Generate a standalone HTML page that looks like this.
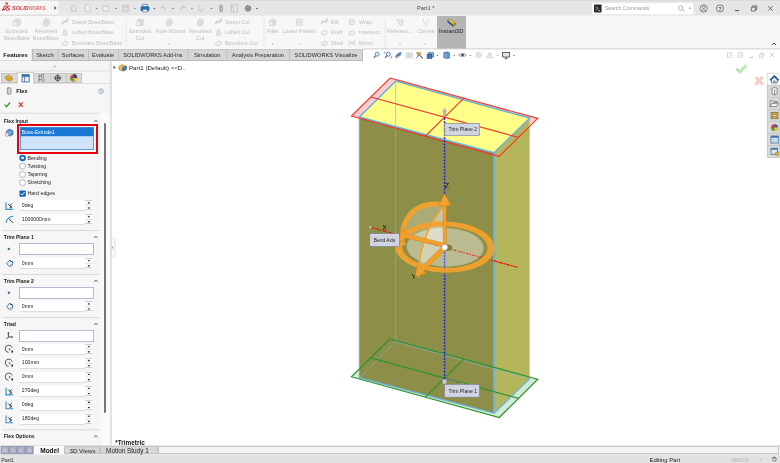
<!DOCTYPE html>
<html lang="en"><head><meta charset="utf-8"><title>SOLIDWORKS - Part1</title>
<style>
html,body{margin:0;padding:0;background:#fff;}
body{width:780px;height:463px;overflow:hidden;position:relative;font-family:"Liberation Sans", sans-serif;}
#app{position:absolute;left:0;top:0;width:780px;height:463px;overflow:hidden;background:#fff;filter:blur(0.4px);}
.b{position:absolute;box-sizing:border-box;}
.t{position:absolute;white-space:nowrap;}
svg{position:absolute;left:0;top:0;overflow:visible;}
</style></head><body><div id="app">
<svg width="780" height="463" viewBox="0 0 780 463"><rect x="0" y="0" width="780" height="16" fill="#e6e6e6"/></svg>
<svg width="780" height="463" viewBox="0 0 780 463"><rect x="0" y="0.9" width="58.6" height="13.8" fill="#f6f6f6"/></svg>
<svg width="780" height="463" viewBox="0 0 780 463"><rect x="0" y="0" width="780" height="0.9" fill="#dadada"/></svg>
<svg width="780" height="463" viewBox="0 0 780 463"><rect x="0" y="14.7" width="58.6" height="1.2" fill="#dedede"/></svg>
<svg width="780" height="463" viewBox="0 0 780 463"><rect x="58.6" y="15" width="721.4" height="1" fill="#ededed"/></svg>
<svg width="780" height="463" viewBox="0 0 780 463"><rect x="0" y="16" width="780" height="32.6" fill="#f7f7f7"/></svg>
<svg width="780" height="463" viewBox="0 0 780 463"><rect x="0" y="48.6" width="363" height="12" fill="#f7f7f7"/></svg>
<svg width="780" height="463" viewBox="0 0 780 463"><rect x="363" y="48.3" width="417" height="1.1" fill="#d2d2d2"/></svg>
<svg width="780" height="463" viewBox="0 0 780 463"><rect x="0" y="60.3" width="111.6" height="0.9" fill="#cfcfcf"/></svg>
<svg width="780" height="463" viewBox="0 0 780 463"><rect x="111.6" y="61.2" width="668.4" height="384.6" fill="#ffffff"/></svg>
<svg width="780" height="463" viewBox="0 0 780 463"><rect x="0" y="61.2" width="110" height="384.6" fill="#f6f6f6"/></svg>
<svg width="780" height="463" viewBox="0 0 780 463"><rect x="109.9" y="61.2" width="1.9" height="384.6" fill="#dcdcdc"/></svg>
<svg width="780" height="463" viewBox="0 0 780 463"><rect x="0" y="445.8" width="780" height="8.6" fill="#f0f0f0"/></svg>
<svg width="780" height="463" viewBox="0 0 780 463"><rect x="0" y="445.6" width="780" height="0.7" fill="#c2c2c2"/></svg>
<svg width="780" height="463" viewBox="0 0 780 463"><rect x="0" y="454.3" width="780" height="8.7" fill="#e2e2e2"/></svg>
<svg width="780" height="463" viewBox="0 0 780 463">
<g fill="none" stroke="#da333b" stroke-width="1.05" stroke-linecap="round" stroke-linejoin="round">
<path d="M5.4 3.2 Q6.8 2.2 7.6 3.2 Q7.8 4.2 6.6 4.8"/>
<path d="M2.4 10.2 L4.6 6 Q6.4 5.6 6.4 7.4 Q6 9.8 2.4 10.2 Z"/>
<path d="M9.8 6.2 Q7.6 5.6 7.4 7 Q7.4 7.9 8.6 8.2 Q9.8 8.7 9.2 9.7 Q8.2 10.6 6.4 10"/>
</g>
<text x="12.1" y="10.2" font-family="Liberation Sans, sans-serif" font-size="5.8" font-weight="bold" font-style="italic" fill="#da333b" textLength="16.6" lengthAdjust="spacingAndGlyphs">SOLID</text>
<text x="28.9" y="10.2" font-family="Liberation Sans, sans-serif" font-size="5.8" font-style="italic" fill="#da333b" textLength="16.4" lengthAdjust="spacingAndGlyphs">WORKS</text>
<path d="M54.2 5.9 L56.6 7.9 L54.2 9.9 Z" fill="#555"/>
<path d="M70.6 8.2 L73.8 5.2 L77 8.2 M71.6 7.8 V11.4 H76 V7.8" fill="none" stroke="#c2c2c2" stroke-width="0.9"/>
<path d="M85.4 4.8 H88.6 L90 6.2 V11.6 H85.4 Z" fill="#f2f2f2" stroke="#c2c2c2" stroke-width="0.8"/>
<path d="M95.60000000000001 8.0 L97.8 8.0 L96.7 9.299999999999999 Z" fill="#777"/>
<path d="M103 6 H105.4 L106 6.8 H108.6 V11 H103 Z" fill="#eee" stroke="#c2c2c2" stroke-width="0.8"/><path d="M106.6 4.6 q1.6 -0.6 2.2 1" fill="none" stroke="#c2c2c2" stroke-width="0.7"/>
<path d="M114.9 8.0 L117.1 8.0 L116 9.299999999999999 Z" fill="#777"/>
<path d="M122.6 5.2 H128.6 V11.6 H122.6 Z M124 5.2 V7.6 H127.4 V5.2 M124 11.6 V9.2 H127.4 V11.6" fill="#eee" stroke="#c2c2c2" stroke-width="0.8"/>
<path d="M133.9 8.0 L136.1 8.0 L135 9.299999999999999 Z" fill="#777"/>
<path d="M142.6 4.4 H147.4 V7 H142.6 Z" fill="#fff" stroke="#2c6aa6" stroke-width="0.7"/><path d="M141 6.8 H149 V10.6 H141 Z" fill="#2f73b5" stroke="#1d4f85" stroke-width="0.6"/><path d="M142.8 9.4 H147.2 V12 H142.8 Z" fill="#fff" stroke="#2c6aa6" stroke-width="0.6"/>
<path d="M153.3 8.0 L155.5 8.0 L154.4 9.299999999999999 Z" fill="#444"/>
<path d="M161.4 7.6 L163 5.4 M161.4 7.6 L163.8 8 M161.6 7.4 Q164.6 5.2 165.6 8 Q165.8 10 164 11" fill="none" stroke="#c2c2c2" stroke-width="0.8"/>
<path d="M171.9 8.0 L174.1 8.0 L173 9.299999999999999 Z" fill="#777"/>
<path d="M184.8 7.6 L183.2 5.4 M184.8 7.6 L182.4 8 M184.6 7.4 Q181.6 5.2 180.6 8 Q180.4 10 182.2 11" fill="none" stroke="#c2c2c2" stroke-width="0.8"/>
<path d="M190.9 8.0 L193.1 8.0 L192 9.299999999999999 Z" fill="#777"/>
<path d="M199 5 L203.4 8.6 L201.2 8.8 L202.2 11.2 L201.2 11.6 L200.2 9.2 L199 10.6 Z" fill="#f4f4f4" stroke="#c2c2c2" stroke-width="0.7"/>
<path d="M210.4 8.0 L212.6 8.0 L211.5 9.299999999999999 Z" fill="#777"/>
<rect x="219.4" y="4.6" width="3.4" height="7.6" rx="1.6" fill="#9a9a9a"/><circle cx="221.1" cy="6.6" r="0.8" fill="#ddd"/><circle cx="221.1" cy="8.6" r="0.8" fill="#ddd"/><circle cx="221.1" cy="10.5" r="0.8" fill="#ddd"/>
<rect x="231.2" y="5" width="6" height="7" fill="#ececec" stroke="#b4b4b4" stroke-width="0.7"/><path d="M233.4 5 V12 M231.2 7.4 H233.4" stroke="#b4b4b4" stroke-width="0.6"/>
<circle cx="248" cy="8.4" r="2.6" fill="none" stroke="#707070" stroke-width="1.5" stroke-dasharray="1.1 0.7"/><circle cx="248" cy="8.4" r="2.2" fill="#e6e6e6" stroke="#707070" stroke-width="0.9"/><rect x="246.6" y="7.4" width="2.8" height="2" fill="#707070"/>
<path d="M255.9 8.0 L258.1 8.0 L257 9.299999999999999 Z" fill="#444"/>
<rect x="592" y="3" width="101.4" height="11.2" fill="#fff"/>
<rect x="594" y="4.6" width="7.6" height="7.8" rx="0.6" fill="#2b2b2b"/><path d="M596 6.6 L597.8 8.4 L596 10.2 M598.2 10.6 H600" fill="none" stroke="#fff" stroke-width="0.7"/>
<circle cx="680.6" cy="8" r="2.2" fill="none" stroke="#9a9a9a" stroke-width="0.7"/><path d="M682.2 9.6 L684.4 11.8" stroke="#9a9a9a" stroke-width="0.8"/>
<path d="M688.9 7.800000000000001 L691.1 7.800000000000001 L690 9.1 Z" fill="#666"/>
<circle cx="703.6" cy="8.4" r="3.6" fill="none" stroke="#555" stroke-width="0.7"/><circle cx="703.6" cy="7.4" r="1.2" fill="none" stroke="#555" stroke-width="0.6"/><path d="M701.4 11 Q703.6 8 705.8 11" fill="none" stroke="#555" stroke-width="0.6"/>
<circle cx="720" cy="8.4" r="3.6" fill="none" stroke="#555" stroke-width="0.7"/>
<text x="720" y="10.5" text-anchor="middle" font-family="Liberation Sans, sans-serif" font-size="5.6" font-weight="bold" fill="#555">?</text>
<path d="M734.8 10.6 H739.2" stroke="#444" stroke-width="0.9"/>
<path d="M751.4 7.2 H755.4 V11 H751.4 Z M752.8 7.2 V5.8 H756.8 V9.6 H755.4" fill="none" stroke="#444" stroke-width="0.7"/>
<path d="M768.2 6.2 L772.6 10.6 M772.6 6.2 L768.2 10.6" stroke="#444" stroke-width="0.8"/>
</svg>
<span class="t" style="top:5.47px;font-size:5.7px;line-height:6.84px;color:#444;left:325.7px;width:200px;text-align:center;">Part1 *</span>
<span class="t" style="top:5.38px;font-size:5.2px;line-height:6.24px;color:#9a9a9a;left:604.9px;">Search Commands</span>
<svg width="780" height="463" viewBox="0 0 780 463">
<path d="M14.35 20.35 L17.075 18.75 L20.45 19.95 V24.85 L16.7 26.25 L14.35 25.05 Z" fill="#dedede" stroke="#d0d0d0" stroke-width="0.8" stroke-linejoin="round"/><path d="M12.95 21.35 H17.075 V25.65 H12.95 Z" fill="#f4f4f4" stroke="#d0d0d0" stroke-width="0.7"/>
<path d="M43.25 25.3 Q42.25 21.5 45.625 18.3 Q49.75 18.7 49.75 22.3 Q49.0 26.3 45.25 26.3 Z" fill="#e0e0e0" stroke="#d0d0d0" stroke-width="0.8"/><path d="M43.85 22.700000000000003 Q46.0 20.3 48.95 22.3" fill="none" stroke="#d0d0d0" stroke-width="0.7"/>
<path d="M62.2 23.6 Q62.800000000000004 20.8 65.2 21.599999999999998 Q67.2 22.0 67.8 19.2 " fill="none" stroke="#d0d0d0" stroke-width="1.7" stroke-linecap="round"/>
<path d="M63.2 35.3 V33.1 L64.0 29.7 H66.0 L66.8 33.1 V35.3 Z" fill="#e6e6e6" stroke="#d0d0d0" stroke-width="0.8"/>
<path d="M62.2 43.2 Q65.0 39.6 67.8 41.800000000000004 V44.400000000000006 Q65.0 46.6 62.2 45.2 Z" fill="#efefef" stroke="#d0d0d0" stroke-width="0.8"/>
<path d="M126.2 18 V47" stroke="#e2e2e2" stroke-width="0.8"/>
<path d="M137.6 20.35 L140.04999999999998 18.75 L143.2 19.95 V24.85 L139.7 26.25 L137.6 25.05 Z" fill="#dedede" stroke="#d0d0d0" stroke-width="0.8" stroke-linejoin="round"/><path d="M136.2 21.35 H140.04999999999998 V25.65 H136.2 Z" fill="#f4f4f4" stroke="#d0d0d0" stroke-width="0.7"/>
<path d="M166.5 25.05 Q165.5 21.55 168.65 18.55 Q172.5 18.95 172.5 22.3 Q171.8 26.05 168.3 26.05 Z" fill="#e0e0e0" stroke="#d0d0d0" stroke-width="0.8"/><path d="M167.1 22.675 Q169.0 20.425 171.7 22.3" fill="none" stroke="#d0d0d0" stroke-width="0.7"/>
<path d="M168.1 43.7 L169.9 43.7 L169 44.800000000000004 Z" fill="#8a8a8a"/>
<path d="M197.5 25.05 Q196.5 21.55 199.65 18.55 Q203.5 18.95 203.5 22.3 Q202.8 26.05 199.3 26.05 Z" fill="#e0e0e0" stroke="#d0d0d0" stroke-width="0.8"/><path d="M198.1 22.675 Q200.0 20.425 202.7 22.3" fill="none" stroke="#d0d0d0" stroke-width="0.7"/>
<path d="M215.7 23.6 Q216.29999999999998 20.8 218.7 21.599999999999998 Q220.7 22.0 221.29999999999998 19.2 " fill="none" stroke="#d0d0d0" stroke-width="1.7" stroke-linecap="round"/>
<path d="M216.7 35.3 V33.1 L217.5 29.7 H219.5 L220.29999999999998 33.1 V35.3 Z" fill="#e6e6e6" stroke="#d0d0d0" stroke-width="0.8"/>
<path d="M215.7 43.2 Q218.5 39.6 221.29999999999998 41.800000000000004 V44.400000000000006 Q218.5 46.6 215.7 45.2 Z" fill="#efefef" stroke="#d0d0d0" stroke-width="0.8"/>
<path d="M264 18 V47" stroke="#e2e2e2" stroke-width="0.8"/>
<path d="M270.75 20.6 L272.925 19.0 L275.85 20.2 V24.6 L272.6 26.0 L270.75 24.8 Z" fill="#dedede" stroke="#d0d0d0" stroke-width="0.8" stroke-linejoin="round"/><path d="M269.35 21.6 H272.925 V25.4 H269.35 Z" fill="#f4f4f4" stroke="#d0d0d0" stroke-width="0.7"/>
<path d="M271.70000000000005 43.7 L273.5 43.7 L272.6 44.800000000000004 Z" fill="#8a8a8a"/>
<rect x="296.6" y="19.2" width="2.4" height="2.4" fill="none" stroke="#d0d0d0" stroke-width="0.7"/>
<rect x="296.6" y="22.8" width="2.4" height="2.4" fill="none" stroke="#d0d0d0" stroke-width="0.7"/>
<rect x="300.20000000000005" y="19.2" width="2.4" height="2.4" fill="none" stroke="#d0d0d0" stroke-width="0.7"/>
<rect x="300.20000000000005" y="22.8" width="2.4" height="2.4" fill="none" stroke="#d0d0d0" stroke-width="0.7"/>
<path d="M298.6 43.7 L300.4 43.7 L299.5 44.800000000000004 Z" fill="#8a8a8a"/>
<path d="M321.59999999999997 23.6 Q322.2 20.8 324.59999999999997 21.599999999999998 Q326.59999999999997 22.0 327.2 19.2 " fill="none" stroke="#d0d0d0" stroke-width="1.7" stroke-linecap="round"/>
<path d="M321.59999999999997 32.7 Q324.4 29.099999999999998 327.2 31.3 V33.9 Q324.4 36.1 321.59999999999997 34.7 Z" fill="#efefef" stroke="#d0d0d0" stroke-width="0.8"/>
<path d="M321.59999999999997 43.2 Q324.4 39.6 327.2 41.800000000000004 V44.400000000000006 Q324.4 46.6 321.59999999999997 45.2 Z" fill="#efefef" stroke="#d0d0d0" stroke-width="0.8"/>
<rect x="349.4" y="19.599999999999998" width="4.8" height="4.8" fill="#efefef" stroke="#d0d0d0" stroke-width="0.8"/><path d="M349.4 21.4 H354.2" stroke="#d0d0d0" stroke-width="0.7"/>
<path d="M349.0 32.7 Q351.8 29.099999999999998 354.6 31.3 V33.9 Q351.8 36.1 349.0 34.7 Z" fill="#efefef" stroke="#d0d0d0" stroke-width="0.8"/>
<path d="M349.0 40.2 V45.800000000000004 M354.6 40.2 V45.800000000000004 M350.4 41.2 V44.800000000000004 L351.6 43.0 Z M353.2 41.2 V44.800000000000004 L352.0 43.0 Z" fill="#e4e4e4" stroke="#d0d0d0" stroke-width="0.6"/>
<path d="M385 18 V47" stroke="#e2e2e2" stroke-width="0.8"/>
<path d="M398 20 H402.6 V25 H399.4 Z" fill="#ececec" stroke="#d0d0d0" stroke-width="0.8"/><circle cx="397.2" cy="19.6" r="0.7" fill="#bbb"/>
<path d="M399.1 43.7 L400.9 43.7 L400 44.800000000000004 Z" fill="#8a8a8a"/>
<path d="M423.4 19 Q423 23.6 425.8 23.6 Q428.4 23.6 428 19 M424 26 Q425.8 23.4 427.6 26" fill="none" stroke="#d0d0d0" stroke-width="0.8"/>
<path d="M424.3 43.7 L426.09999999999997 43.7 L425.2 44.800000000000004 Z" fill="#8a8a8a"/>
<rect x="437" y="16" width="29" height="32.6" fill="#b5b5b5"/>
<path d="M447.6 20.6 L450.6 19.4 L455.8 23.2 L452.8 24.6 Z" fill="#f3c53c" stroke="#7a5c12" stroke-width="0.5"/><path d="M447.6 20.6 L452.8 24.6 V26.4 L447.6 22.2 Z" fill="#2f63b8" stroke="#1b3f7c" stroke-width="0.4"/><path d="M452.8 24.6 L455.8 23.2 V25 L452.8 26.4 Z" fill="#c8951c" stroke="#7a5c12" stroke-width="0.4"/>
<path d="M771.8 45.2 L774 43 L776.2 45.2" fill="none" stroke="#333" stroke-width="0.9"/>
</svg>
<span class="t" style="top:27.65px;font-size:5.4px;line-height:6.48px;color:#bebebe;left:-83.1px;width:200px;text-align:center;">Extruded</span>
<span class="t" style="top:35.15px;font-size:5.4px;line-height:6.48px;color:#bebebe;left:-83.1px;width:200px;text-align:center;">Boss/Base</span>
<span class="t" style="top:27.65px;font-size:5.4px;line-height:6.48px;color:#bebebe;left:-54px;width:200px;text-align:center;">Revolved</span>
<span class="t" style="top:35.15px;font-size:5.4px;line-height:6.48px;color:#bebebe;left:-54px;width:200px;text-align:center;">Boss/Base</span>
<span class="t" style="top:18.75px;font-size:5.4px;line-height:6.48px;color:#bebebe;left:71.8px;">Swept Boss/Base</span>
<span class="t" style="top:29.15px;font-size:5.4px;line-height:6.48px;color:#bebebe;left:71.8px;">Lofted Boss/Base</span>
<span class="t" style="top:39.65px;font-size:5.4px;line-height:6.48px;color:#bebebe;left:71.8px;">Boundary Boss/Base</span>
<span class="t" style="top:27.65px;font-size:5.4px;line-height:6.48px;color:#bebebe;left:40px;width:200px;text-align:center;">Extruded</span>
<span class="t" style="top:35.15px;font-size:5.4px;line-height:6.48px;color:#bebebe;left:40px;width:200px;text-align:center;">Cut</span>
<span class="t" style="top:27.65px;font-size:5.4px;line-height:6.48px;color:#bebebe;left:70.5px;width:200px;text-align:center;">Hole Wizard</span>
<span class="t" style="top:27.65px;font-size:5.4px;line-height:6.48px;color:#bebebe;left:100.19999999999999px;width:200px;text-align:center;">Revolved</span>
<span class="t" style="top:35.15px;font-size:5.4px;line-height:6.48px;color:#bebebe;left:100.19999999999999px;width:200px;text-align:center;">Cut</span>
<span class="t" style="top:18.75px;font-size:5.4px;line-height:6.48px;color:#bebebe;left:224.9px;">Swept Cut</span>
<span class="t" style="top:29.15px;font-size:5.4px;line-height:6.48px;color:#bebebe;left:224.9px;">Lofted Cut</span>
<span class="t" style="top:39.65px;font-size:5.4px;line-height:6.48px;color:#bebebe;left:224.9px;">Boundary Cut</span>
<span class="t" style="top:27.65px;font-size:5.4px;line-height:6.48px;color:#bebebe;left:172.60000000000002px;width:200px;text-align:center;">Fillet</span>
<span class="t" style="top:27.65px;font-size:5.4px;line-height:6.48px;color:#bebebe;left:199.60000000000002px;width:200px;text-align:center;">Linear Pattern</span>
<span class="t" style="top:18.75px;font-size:5.4px;line-height:6.48px;color:#bebebe;left:330.8px;">Rib</span>
<span class="t" style="top:29.15px;font-size:5.4px;line-height:6.48px;color:#bebebe;left:330.8px;">Draft</span>
<span class="t" style="top:39.65px;font-size:5.4px;line-height:6.48px;color:#bebebe;left:330.8px;">Shell</span>
<span class="t" style="top:18.75px;font-size:5.4px;line-height:6.48px;color:#bebebe;left:359px;">Wrap</span>
<span class="t" style="top:29.15px;font-size:5.4px;line-height:6.48px;color:#bebebe;left:359px;">Intersect</span>
<span class="t" style="top:39.65px;font-size:5.4px;line-height:6.48px;color:#bebebe;left:359px;">Mirror</span>
<span class="t" style="top:27.65px;font-size:5.4px;line-height:6.48px;color:#bebebe;left:300.1px;width:200px;text-align:center;">Referenc...</span>
<span class="t" style="top:27.65px;font-size:5.4px;line-height:6.48px;color:#bebebe;left:325.8px;width:200px;text-align:center;">Curves</span>
<span class="t" style="top:27.87px;font-size:5.7px;line-height:6.84px;color:#1c1c1c;left:351.2px;width:200px;text-align:center;">Instant3D</span>
<div class="b" style="left:31.8px;top:49px;width:330.8px;height:11.6px;background:#d6d6d6;border:0.7px solid #bababa;border-top-color:#c8c8c8;"></div>
<svg width="780" height="463" viewBox="0 0 780 463"><rect x="31.8" y="49" width="0.8" height="11.4" fill="#bababa"/></svg>
<span class="t" style="top:52.47px;font-size:5.7px;line-height:6.84px;color:#2a2a2a;left:-55.099999999999994px;width:200px;text-align:center;">Sketch</span>
<svg width="780" height="463" viewBox="0 0 780 463"><rect x="57.6" y="49" width="0.8" height="11.4" fill="#bababa"/></svg>
<span class="t" style="top:52.47px;font-size:5.7px;line-height:6.84px;color:#2a2a2a;left:-27.0px;width:200px;text-align:center;">Surfaces</span>
<svg width="780" height="463" viewBox="0 0 780 463"><rect x="88" y="49" width="0.8" height="11.4" fill="#bababa"/></svg>
<span class="t" style="top:52.47px;font-size:5.7px;line-height:6.84px;color:#2a2a2a;left:3.200000000000003px;width:200px;text-align:center;">Evaluate</span>
<svg width="780" height="463" viewBox="0 0 780 463"><rect x="118" y="49" width="0.8" height="11.4" fill="#bababa"/></svg>
<span class="t" style="top:52.47px;font-size:5.7px;line-height:6.84px;color:#2a2a2a;left:53.0px;width:200px;text-align:center;">SOLIDWORKS Add-Ins</span>
<svg width="780" height="463" viewBox="0 0 780 463"><rect x="187.6" y="49" width="0.8" height="11.4" fill="#bababa"/></svg>
<span class="t" style="top:52.47px;font-size:5.7px;line-height:6.84px;color:#2a2a2a;left:107.19999999999999px;width:200px;text-align:center;">Simulation</span>
<svg width="780" height="463" viewBox="0 0 780 463"><rect x="226.4" y="49" width="0.8" height="11.4" fill="#bababa"/></svg>
<span class="t" style="top:52.47px;font-size:5.7px;line-height:6.84px;color:#2a2a2a;left:157.89999999999998px;width:200px;text-align:center;">Analysis Preparation</span>
<svg width="780" height="463" viewBox="0 0 780 463"><rect x="289" y="49" width="0.8" height="11.4" fill="#bababa"/></svg>
<span class="t" style="top:52.47px;font-size:5.7px;line-height:6.84px;color:#2a2a2a;left:226.0px;width:200px;text-align:center;">SOLIDWORKS Visualize</span>
<span class="t" style="top:52.34px;font-size:5.9px;line-height:7.08px;color:#111;font-weight:bold;left:3.3px;">Features</span>
<svg width="780" height="463" viewBox="0 0 780 463">
<circle cx="377.2" cy="54.2" r="2" fill="#e8f0f8" stroke="#3d6d9e" stroke-width="0.8"/><path d="M375.79999999999995 55.6 L373.79999999999995 57.8" stroke="#3d6d9e" stroke-width="1.1"/>
<circle cx="388.40000000000003" cy="54.2" r="2" fill="#e8f0f8" stroke="#3d6d9e" stroke-width="0.8"/><path d="M387.0 55.6 L385.0 57.8" stroke="#3d6d9e" stroke-width="1.1"/>
<path d="M384.4 52.2 h1.6 M384.4 52.2 v1.6 M391.6 57.8 h-1.6 M391.6 57.8 v-1.6" stroke="#555" stroke-width="0.5" fill="none"/>
<path d="M395.4 57 Q397 52.6 401.4 52.6 L400 56 Q397.6 55.6 395.4 57 Z" fill="#5b8fc7" stroke="#34608f" stroke-width="0.5"/><path d="M396 58 l2.2 -1" stroke="#c33" stroke-width="0.7"/>
<path d="M406 52.8 H409 V58 H406 Z M409.6 52.8 H412.4 V58 H409.6 Z" fill="#e2e2e2" stroke="#c6c6c6" stroke-width="0.5"/>
<circle cx="419" cy="54" r="2" fill="#f4c04a" stroke="#b07a14" stroke-width="0.5"/><path d="M418.6 55.6 L416 58.4 M420 55.8 L422.6 58.6 M416.4 52.4 L423 58" stroke="#3d6d9e" stroke-width="0.8"/>
<path d="M427 54 H432 V58.6 H427 Z" fill="#3f78b8" stroke="#28507f" stroke-width="0.5"/><path d="M428.6 52.4 H433.6 V57 H432 V54 H428.6 Z" fill="#8db4dd" stroke="#28507f" stroke-width="0.5"/>
<path d="M436.4 54.9 L438.4 54.9 L437.4 56.0 Z" fill="#555"/>
<path d="M443.8 52.6 L447.4 51.8 L449.6 52.8 V58 L446 58.8 L443.8 57.8 Z" fill="#5b93cf" stroke="#2c5a8c" stroke-width="0.5"/><path d="M446 53.6 V58.8" stroke="#dfe9f4" stroke-width="0.5"/>
<path d="M453.2 54.9 L455.2 54.9 L454.2 56.0 Z" fill="#555"/>
<path d="M458.6 55 Q462.6 51.4 466.6 55 Q462.6 58.6 458.6 55 Z" fill="#d8d8d8" stroke="#777" stroke-width="0.5"/><circle cx="462.6" cy="55" r="1.3" fill="#444"/>
<path d="M469.4 54.9 L471.4 54.9 L470.4 56.0 Z" fill="#555"/>
<circle cx="478.6" cy="55" r="2.8" fill="#e9e9e9" stroke="#cfcfcf" stroke-width="0.6"/><path d="M476 55 H481.2 M478.6 52.4 V57.6" stroke="#d4d4d4" stroke-width="0.5"/>
<path d="M486.6 57.8 L489.6 52.2 L492.8 57.8 Z" fill="#e6e6e6" stroke="#cdcdcd" stroke-width="0.6"/><circle cx="489.7" cy="54" r="1.3" fill="#ddd"/>
<path d="M496.8 54.9 L498.8 54.9 L497.8 56.0 Z" fill="#888"/>
<rect x="502.6" y="52.4" width="7" height="4.6" fill="#dfe6ee" stroke="#444" stroke-width="0.8"/><path d="M504.6 58.6 H507.6 M506.1 57 V58.6" stroke="#444" stroke-width="0.8"/>
<path d="M513.2 54.9 L515.2 54.9 L514.2 56.0 Z" fill="#555"/>
<rect x="727.4" y="52.8" width="4.4" height="4.4" fill="none" stroke="#bdbdbd" stroke-width="0.6"/><path d="M729 55 h1.6" stroke="#bdbdbd" stroke-width="0.6"/>
<rect x="738.2" y="52.8" width="4.4" height="4.4" fill="none" stroke="#bdbdbd" stroke-width="0.6"/><path d="M740.4 55 h1.6" stroke="#999" stroke-width="0.6"/>
<path d="M749.4 57.4 H753" stroke="#bdbdbd" stroke-width="0.8"/>
<path d="M759.4 54.4 H762.8 V57.6 H759.4 Z M760.6 54.4 V53 H764 V56.2 H762.8" fill="none" stroke="#bdbdbd" stroke-width="0.6"/>
<path d="M770 53 L774 57 M774 53 L770 57" stroke="#bdbdbd" stroke-width="0.7"/>
</svg>
<svg width="780" height="463" viewBox="0 0 780 463"><rect x="0" y="61.2" width="110" height="9.6" fill="#f4f4f4"/></svg>
<svg width="780" height="463" viewBox="0 0 780 463"><circle cx="54.6" cy="66.5" r="1.1" fill="#b8b8b8"/></svg>
<svg width="780" height="463" viewBox="0 0 780 463"><rect x="0" y="70.6" width="110" height="0.7" fill="#d2d2d2"/></svg>
<div class="b" style="left:1.1px;top:72.6px;width:81px;height:10.6px;background:#dadada;border:0.6px solid #c6c6c6;"></div>
<div class="b" style="left:17px;top:72.3px;width:16.5px;height:11.6px;background:#fdfdfd;border:0.6px solid #cfcfcf;border-bottom:none;"></div>
<svg width="780" height="463" viewBox="0 0 780 463"><rect x="33.5" y="72.6" width="0.6" height="10.6" fill="#c2c2c2"/></svg>
<svg width="780" height="463" viewBox="0 0 780 463"><rect x="50" y="72.6" width="0.6" height="10.6" fill="#c2c2c2"/></svg>
<svg width="780" height="463" viewBox="0 0 780 463"><rect x="66" y="72.6" width="0.6" height="10.6" fill="#c2c2c2"/></svg>
<svg width="780" height="463" viewBox="0 0 780 463"><rect x="0" y="83.3" width="17" height="0.7" fill="#d6d6d6"/></svg>
<svg width="780" height="463" viewBox="0 0 780 463"><rect x="33.5" y="83.3" width="76.7" height="0.7" fill="#d6d6d6"/></svg>
<svg width="780" height="463" viewBox="0 0 780 463">
<path d="M5.6 77 L8.6 75 L12.2 77.4 L12.2 79.6 L9.2 81.4 L5.6 79 Z" fill="#e9b634" stroke="#9a6d10" stroke-width="0.6"/><path d="M5.6 77 L9.2 79.2 L12.2 77.4" fill="none" stroke="#9a6d10" stroke-width="0.5"/>
<rect x="22" y="74.6" width="7.2" height="7.4" fill="#e8f0f8" stroke="#2b5f94" stroke-width="0.8"/><path d="M22 76.6 H29.2 M24.6 76.6 V82" stroke="#2b5f94" stroke-width="0.7"/><rect x="22" y="74.6" width="7.2" height="2" fill="#3b77b5"/>
<path d="M39 74.6 V81.8 M39 76 H41.4 M39 79.6 H41.4" stroke="#444" stroke-width="0.6" fill="none"/><rect x="41.4" y="74.8" width="2.4" height="2.2" fill="#eee" stroke="#444" stroke-width="0.5"/><circle cx="43" cy="80" r="1.4" fill="#eee" stroke="#444" stroke-width="0.5"/>
<circle cx="57.7" cy="78" r="2.6" fill="none" stroke="#333" stroke-width="0.8"/><path d="M53.8 78 H61.6 M57.7 74.2 V81.8" stroke="#333" stroke-width="0.7"/><circle cx="57.7" cy="78" r="0.9" fill="#333"/>
<circle cx="73.7" cy="78" r="3.5" fill="#e53b2c"/><path d="M73.7 78 L73.7 74.5 A3.5 3.5 0 0 1 77.2 78 Z" fill="#2a4d9b"/><path d="M73.7 78 L70.2 78 A3.5 3.5 0 0 0 73.7 81.5 Z" fill="#3fae49"/><path d="M73.7 78 L73.7 81.5 A3.5 3.5 0 0 0 77.2 78 Z" fill="#f5c928"/><path d="M73.7 74.5 A3.5 3.5 0 0 1 76.6 76" stroke="#222" stroke-width="0.9" fill="none"/>
<path d="M7 88 Q9.4 87 11 88.4 V93.6 Q9 95 7 93.6 Q8 91 7 88 Z" fill="#eee" stroke="#555" stroke-width="0.6"/><path d="M8.6 88 Q9.6 91 8.6 94.2" fill="none" stroke="#777" stroke-width="0.5"/>
<circle cx="100.9" cy="91.2" r="2.5" fill="#f4f7fa" stroke="#6f8fb0" stroke-width="0.6"/>
<text x="100.9" y="92.6" text-anchor="middle" font-family="Liberation Sans, sans-serif" font-size="3.8" font-weight="bold" fill="#4f78a4">?</text>
<path d="M4.6 104.6 L6.6 106.7 L10 102.3" fill="none" stroke="#2d9a2d" stroke-width="1.3"/>
<path d="M18.8 102.4 L22.8 106.9 M22.8 102.4 L18.8 106.9" stroke="#e0301e" stroke-width="1.2"/>
</svg>
<span class="t" style="top:87.53px;font-size:5.6px;line-height:6.72px;color:#111;font-weight:bold;left:16.3px;">Flex</span>
<svg width="780" height="463" viewBox="0 0 780 463"><rect x="0" y="112.8" width="99.4" height="0.8" fill="#d4d4d4"/></svg>
<span class="t" style="top:117.94px;font-size:5.1px;line-height:6.12px;color:#222;font-weight:bold;left:3.8px;">Flex Input</span>
<svg width="780" height="463" viewBox="0 0 780 463"><path d="M94.2 121.89999999999999 L95.9 120.19999999999999 L97.6 121.89999999999999" fill="none" stroke="#444" stroke-width="0.9"/></svg>
<div class="b" style="left:17px;top:124.2px;width:81.3px;height:29.8px;border:2.1px solid #e8000f;"></div>
<div class="b" style="left:20.1px;top:127.1px;width:74px;height:23.2px;background:#cfe4f9;border:0.6px solid #5b9bd8;"></div>
<svg width="780" height="463" viewBox="0 0 780 463"><rect x="20.5" y="127.5" width="73.2" height="8.7" fill="#1b79d6"/></svg>
<span class="t" style="top:129.07px;font-size:5.05px;line-height:6.06px;color:#ffffff;left:21.8px;">Boss-Extrude1</span>
<svg width="780" height="463" viewBox="0 0 780 463"><path d="M6.4 131 L9.4 129.2 L13 130.8 V134.4 L10 136.2 L6.4 134.4 Z" fill="#4f8fd0" stroke="#1e4f86" stroke-width="0.6"/><path d="M6.4 131 L10 132.6 L13 130.8 M10 132.6 V136.2" fill="none" stroke="#dfeaf6" stroke-width="0.5"/><circle cx="7" cy="134.6" r="1.8" fill="#f0f0f0" stroke="#777" stroke-width="0.5"/></svg>
<svg width="780" height="463" viewBox="0 0 780 463"><circle cx="22.6" cy="157.9" r="2.3" fill="#fff" stroke="#1565c0" stroke-width="1.9"/></svg>
<span class="t" style="top:154.68px;font-size:5.2px;line-height:6.24px;color:#222;left:27.5px;">Bending</span>
<svg width="780" height="463" viewBox="0 0 780 463"><circle cx="22.6" cy="166.1" r="2.95" fill="#fff" stroke="#8c8c8c" stroke-width="0.6"/></svg>
<span class="t" style="top:162.88px;font-size:5.2px;line-height:6.24px;color:#222;left:27.5px;">Twisting</span>
<svg width="780" height="463" viewBox="0 0 780 463"><circle cx="22.6" cy="174.5" r="2.95" fill="#fff" stroke="#8c8c8c" stroke-width="0.6"/></svg>
<span class="t" style="top:171.28px;font-size:5.2px;line-height:6.24px;color:#222;left:27.5px;">Tapering</span>
<svg width="780" height="463" viewBox="0 0 780 463"><circle cx="22.6" cy="182.7" r="2.95" fill="#fff" stroke="#8c8c8c" stroke-width="0.6"/></svg>
<span class="t" style="top:179.48px;font-size:5.2px;line-height:6.24px;color:#222;left:27.5px;">Stretching</span>
<svg width="780" height="463" viewBox="0 0 780 463"><rect x="19.5" y="190.4" width="6.3" height="6.3" rx="0.9" fill="#1565c0"/></svg>
<svg width="780" height="463" viewBox="0 0 780 463"><path d="M20.8 193.6 L22.2 195 L24.6 192" fill="none" stroke="#fff" stroke-width="0.9"/></svg>
<span class="t" style="top:190.31px;font-size:5.3px;line-height:6.36px;color:#222;left:27.5px;">Hard edges</span>
<div class="b" style="left:19.8px;top:200.25px;width:65px;height:10.2px;background:#ffffff;box-shadow:0 0.5px 0.6px #dcdcdc;"></div>
<span class="t" style="top:201.73px;font-size:5.2px;line-height:6.24px;color:#222;left:21.8px;">0deg</span>
<div class="b" style="left:85.4px;top:200.25px;width:7px;height:10.2px;background:#fbfbfb;border:0.5px solid #cfcfcf;border-left:none;border-right:none;"></div>
<svg width="780" height="463" viewBox="0 0 780 463"><rect x="85.4" y="205.1" width="7" height="0.5" fill="#cfcfcf"/></svg>
<svg width="780" height="463" viewBox="0 0 780 463"><path d="M87.6 203.45 L88.9 201.85 L90.2 203.45 Z M87.6 207.45 L88.9 209.04999999999998 L90.2 207.45 Z" fill="#1c1c1c"/><path d="M6 202.15 V209.35 H13" fill="none" stroke="#3a8dc0" stroke-width="1.1"/><path d="M8 203.95 L11.6 207.54999999999998 M11.8 203.54999999999998 L9.6 205.95 M11.2 205.75 V207.75 H9.4" fill="none" stroke="#222" stroke-width="0.8"/></svg>
<div class="b" style="left:19.8px;top:214.15px;width:65px;height:10.2px;background:#ffffff;box-shadow:0 0.5px 0.6px #dcdcdc;"></div>
<span class="t" style="top:215.63px;font-size:5.2px;line-height:6.24px;color:#222;left:21.8px;">1000000mm</span>
<div class="b" style="left:85.4px;top:214.15px;width:7px;height:10.2px;background:#fbfbfb;border:0.5px solid #cfcfcf;border-left:none;border-right:none;"></div>
<svg width="780" height="463" viewBox="0 0 780 463"><rect x="85.4" y="219.0" width="7" height="0.5" fill="#cfcfcf"/></svg>
<svg width="780" height="463" viewBox="0 0 780 463"><path d="M87.6 217.35 L88.9 215.75 L90.2 217.35 Z M87.6 221.35 L88.9 222.95 L90.2 221.35 Z" fill="#1c1c1c"/><path d="M6 222.85 Q7.4 216.65 13.2 216.25" fill="none" stroke="#3a8dc0" stroke-width="1.1"/><path d="M9 218.85 L13.2 222.85" stroke="#222" stroke-width="0.9"/></svg>
<svg width="780" height="463" viewBox="0 0 780 463"><rect x="2" y="230.2" width="97.2" height="0.8" fill="#d4d4d4"/></svg>
<span class="t" style="top:234.04px;font-size:5.1px;line-height:6.12px;color:#222;font-weight:bold;left:3.8px;">Trim Plane 1</span>
<svg width="780" height="463" viewBox="0 0 780 463"><path d="M94.2 238.0 L95.9 236.29999999999998 L97.6 238.0" fill="none" stroke="#444" stroke-width="0.9"/></svg>
<div class="b" style="left:19.4px;top:242.85px;width:74.7px;height:12px;background:#ffffff;border:0.7px solid #b4b9cf;"></div>
<svg width="780" height="463" viewBox="0 0 780 463"><circle cx="8.9" cy="249.04999999999998" r="1.25" fill="#2f7fae"/></svg>
<div class="b" style="left:19.8px;top:258.09999999999997px;width:65px;height:10.2px;background:#ffffff;box-shadow:0 0.5px 0.6px #dcdcdc;"></div>
<span class="t" style="top:259.58px;font-size:5.2px;line-height:6.24px;color:#222;left:21.8px;">0mm</span>
<div class="b" style="left:85.4px;top:258.09999999999997px;width:7px;height:10.2px;background:#fbfbfb;border:0.5px solid #cfcfcf;border-left:none;border-right:none;"></div>
<svg width="780" height="463" viewBox="0 0 780 463"><rect x="85.4" y="262.95" width="7" height="0.5" fill="#cfcfcf"/></svg>
<svg width="780" height="463" viewBox="0 0 780 463"><path d="M87.6 261.3 L88.9 259.7 L90.2 261.3 Z M87.6 265.3 L88.9 266.9 L90.2 265.3 Z" fill="#1c1c1c"/><path d="M6.6 263.8 L9.4 260.4 L12.6 262.0 V264.59999999999997 L9.6 266.4 Z" fill="#f4f4f4" stroke="#1d5f96" stroke-width="0.8"/><path d="M9.6 260.4 L12.8 262.2" stroke="#222" stroke-width="0.8"/><circle cx="11.4" cy="265.4" r="1" fill="#eee" stroke="#444" stroke-width="0.4"/></svg>
<svg width="780" height="463" viewBox="0 0 780 463"><rect x="2" y="274.1" width="97.2" height="0.8" fill="#d4d4d4"/></svg>
<span class="t" style="top:277.84px;font-size:5.1px;line-height:6.12px;color:#222;font-weight:bold;left:3.8px;">Trim Plane 2</span>
<svg width="780" height="463" viewBox="0 0 780 463"><path d="M94.2 281.8 L95.9 280.1 L97.6 281.8" fill="none" stroke="#444" stroke-width="0.9"/></svg>
<div class="b" style="left:19.4px;top:286.6px;width:74.7px;height:12px;background:#ffffff;border:0.7px solid #b4b9cf;"></div>
<svg width="780" height="463" viewBox="0 0 780 463"><circle cx="8.9" cy="292.8" r="1.25" fill="#2f7fae"/></svg>
<div class="b" style="left:19.8px;top:301.2px;width:65px;height:10.2px;background:#ffffff;box-shadow:0 0.5px 0.6px #dcdcdc;"></div>
<span class="t" style="top:302.68px;font-size:5.2px;line-height:6.24px;color:#222;left:21.8px;">0mm</span>
<div class="b" style="left:85.4px;top:301.2px;width:7px;height:10.2px;background:#fbfbfb;border:0.5px solid #cfcfcf;border-left:none;border-right:none;"></div>
<svg width="780" height="463" viewBox="0 0 780 463"><rect x="85.4" y="306.05" width="7" height="0.5" fill="#cfcfcf"/></svg>
<svg width="780" height="463" viewBox="0 0 780 463"><path d="M87.6 304.40000000000003 L88.9 302.8 L90.2 304.40000000000003 Z M87.6 308.40000000000003 L88.9 310.0 L90.2 308.40000000000003 Z" fill="#1c1c1c"/><path d="M6.6 306.90000000000003 L9.4 303.5 L12.6 305.1 V307.7 L9.6 309.5 Z" fill="#f4f4f4" stroke="#1d5f96" stroke-width="0.8"/><path d="M9.6 303.5 L12.8 305.3" stroke="#222" stroke-width="0.8"/><circle cx="11.4" cy="308.5" r="1" fill="#eee" stroke="#444" stroke-width="0.4"/></svg>
<svg width="780" height="463" viewBox="0 0 780 463"><rect x="2" y="317.2" width="97.2" height="0.8" fill="#d4d4d4"/></svg>
<span class="t" style="top:320.84px;font-size:5.1px;line-height:6.12px;color:#222;font-weight:bold;left:3.8px;">Triad</span>
<svg width="780" height="463" viewBox="0 0 780 463"><path d="M94.2 324.8 L95.9 323.1 L97.6 324.8" fill="none" stroke="#444" stroke-width="0.9"/></svg>
<div class="b" style="left:19.4px;top:330px;width:74.7px;height:12px;background:#ffffff;border:0.7px solid #b4b9cf;"></div>
<svg width="780" height="463" viewBox="0 0 780 463"><path d="M8.4 332.8 V337 L6.4 339 M8.4 337 H12.4" fill="none" stroke="#222" stroke-width="0.8"/><path d="M7.6 333.6 L8.4 332.4 L9.2 333.6 M11.6 336.2 L12.8 337 L11.6 337.8" fill="none" stroke="#222" stroke-width="0.6"/></svg>
<div class="b" style="left:19.8px;top:344.09999999999997px;width:65px;height:10.2px;background:#ffffff;box-shadow:0 0.5px 0.6px #dcdcdc;"></div>
<span class="t" style="top:345.58px;font-size:5.2px;line-height:6.24px;color:#222;left:21.8px;">0mm</span>
<div class="b" style="left:85.4px;top:344.09999999999997px;width:7px;height:10.2px;background:#fbfbfb;border:0.5px solid #cfcfcf;border-left:none;border-right:none;"></div>
<svg width="780" height="463" viewBox="0 0 780 463"><rect x="85.4" y="348.95" width="7" height="0.5" fill="#cfcfcf"/></svg>
<svg width="780" height="463" viewBox="0 0 780 463"><path d="M87.6 347.3 L88.9 345.7 L90.2 347.3 Z M87.6 351.3 L88.9 352.9 L90.2 351.3 Z" fill="#1c1c1c"/><path d="M12.2 347.59999999999997 A3.6 3.6 0 1 0 8.6 352.4" fill="none" stroke="#333" stroke-width="0.8"/><path d="M8.4 349.2 H10.8 M9.6 348.0 V350.4" stroke="#2f7fc0" stroke-width="0.7"/><rect x="11.4" y="350.59999999999997" width="1.6" height="2" fill="#222"/></svg>
<div class="b" style="left:19.8px;top:358.0px;width:65px;height:10.2px;background:#ffffff;box-shadow:0 0.5px 0.6px #dcdcdc;"></div>
<span class="t" style="top:359.48px;font-size:5.2px;line-height:6.24px;color:#222;left:21.8px;">100mm</span>
<div class="b" style="left:85.4px;top:358.0px;width:7px;height:10.2px;background:#fbfbfb;border:0.5px solid #cfcfcf;border-left:none;border-right:none;"></div>
<svg width="780" height="463" viewBox="0 0 780 463"><rect x="85.4" y="362.85" width="7" height="0.5" fill="#cfcfcf"/></svg>
<svg width="780" height="463" viewBox="0 0 780 463"><path d="M87.6 361.20000000000005 L88.9 359.6 L90.2 361.20000000000005 Z M87.6 365.20000000000005 L88.9 366.8 L90.2 365.20000000000005 Z" fill="#1c1c1c"/><path d="M12.2 361.5 A3.6 3.6 0 1 0 8.6 366.3" fill="none" stroke="#333" stroke-width="0.8"/><path d="M8.4 363.1 H10.8 M9.6 361.90000000000003 V364.3" stroke="#2f7fc0" stroke-width="0.7"/><rect x="11.4" y="364.5" width="1.6" height="2" fill="#222"/></svg>
<div class="b" style="left:19.8px;top:371.9px;width:65px;height:10.2px;background:#ffffff;box-shadow:0 0.5px 0.6px #dcdcdc;"></div>
<span class="t" style="top:373.38px;font-size:5.2px;line-height:6.24px;color:#222;left:21.8px;">0mm</span>
<div class="b" style="left:85.4px;top:371.9px;width:7px;height:10.2px;background:#fbfbfb;border:0.5px solid #cfcfcf;border-left:none;border-right:none;"></div>
<svg width="780" height="463" viewBox="0 0 780 463"><rect x="85.4" y="376.75" width="7" height="0.5" fill="#cfcfcf"/></svg>
<svg width="780" height="463" viewBox="0 0 780 463"><path d="M87.6 375.1 L88.9 373.5 L90.2 375.1 Z M87.6 379.1 L88.9 380.7 L90.2 379.1 Z" fill="#1c1c1c"/><path d="M12.2 375.4 A3.6 3.6 0 1 0 8.6 380.2" fill="none" stroke="#333" stroke-width="0.8"/><path d="M8.4 377 H10.8 M9.6 375.8 V378.2" stroke="#2f7fc0" stroke-width="0.7"/><rect x="11.4" y="378.4" width="1.6" height="2" fill="#222"/></svg>
<div class="b" style="left:19.8px;top:385.79999999999995px;width:65px;height:10.2px;background:#ffffff;box-shadow:0 0.5px 0.6px #dcdcdc;"></div>
<span class="t" style="top:387.28px;font-size:5.2px;line-height:6.24px;color:#222;left:21.8px;">270deg</span>
<div class="b" style="left:85.4px;top:385.79999999999995px;width:7px;height:10.2px;background:#fbfbfb;border:0.5px solid #cfcfcf;border-left:none;border-right:none;"></div>
<svg width="780" height="463" viewBox="0 0 780 463"><rect x="85.4" y="390.65" width="7" height="0.5" fill="#cfcfcf"/></svg>
<svg width="780" height="463" viewBox="0 0 780 463"><path d="M87.6 389.0 L88.9 387.4 L90.2 389.0 Z M87.6 393.0 L88.9 394.59999999999997 L90.2 393.0 Z" fill="#1c1c1c"/><path d="M6 387.7 V394.9 H13" fill="none" stroke="#3a8dc0" stroke-width="1.1"/><path d="M8 389.5 L11.6 393.09999999999997 M11.8 389.09999999999997 L9.6 391.5 M11.2 391.29999999999995 V393.29999999999995 H9.4" fill="none" stroke="#222" stroke-width="0.8"/></svg>
<div class="b" style="left:19.8px;top:399.7px;width:65px;height:10.2px;background:#ffffff;box-shadow:0 0.5px 0.6px #dcdcdc;"></div>
<span class="t" style="top:401.18px;font-size:5.2px;line-height:6.24px;color:#222;left:21.8px;">0deg</span>
<div class="b" style="left:85.4px;top:399.7px;width:7px;height:10.2px;background:#fbfbfb;border:0.5px solid #cfcfcf;border-left:none;border-right:none;"></div>
<svg width="780" height="463" viewBox="0 0 780 463"><rect x="85.4" y="404.55" width="7" height="0.5" fill="#cfcfcf"/></svg>
<svg width="780" height="463" viewBox="0 0 780 463"><path d="M87.6 402.90000000000003 L88.9 401.3 L90.2 402.90000000000003 Z M87.6 406.90000000000003 L88.9 408.5 L90.2 406.90000000000003 Z" fill="#1c1c1c"/><path d="M6 401.6 V408.8 H13" fill="none" stroke="#3a8dc0" stroke-width="1.1"/><path d="M8 403.40000000000003 L11.6 407.0 M11.8 403.0 L9.6 405.40000000000003 M11.2 405.2 V407.2 H9.4" fill="none" stroke="#222" stroke-width="0.8"/></svg>
<div class="b" style="left:19.8px;top:413.59999999999997px;width:65px;height:10.2px;background:#ffffff;box-shadow:0 0.5px 0.6px #dcdcdc;"></div>
<span class="t" style="top:415.08px;font-size:5.2px;line-height:6.24px;color:#222;left:21.8px;">180deg</span>
<div class="b" style="left:85.4px;top:413.59999999999997px;width:7px;height:10.2px;background:#fbfbfb;border:0.5px solid #cfcfcf;border-left:none;border-right:none;"></div>
<svg width="780" height="463" viewBox="0 0 780 463"><rect x="85.4" y="418.45" width="7" height="0.5" fill="#cfcfcf"/></svg>
<svg width="780" height="463" viewBox="0 0 780 463"><path d="M87.6 416.8 L88.9 415.2 L90.2 416.8 Z M87.6 420.8 L88.9 422.4 L90.2 420.8 Z" fill="#1c1c1c"/><path d="M6 415.5 V422.7 H13" fill="none" stroke="#3a8dc0" stroke-width="1.1"/><path d="M8 417.3 L11.6 420.9 M11.8 416.9 L9.6 419.3 M11.2 419.09999999999997 V421.09999999999997 H9.4" fill="none" stroke="#222" stroke-width="0.8"/></svg>
<svg width="780" height="463" viewBox="0 0 780 463"><rect x="2" y="429.4" width="97.2" height="0.8" fill="#d4d4d4"/></svg>
<span class="t" style="top:433.24px;font-size:5.1px;line-height:6.12px;color:#222;font-weight:bold;left:3.8px;">Flex Options</span>
<svg width="780" height="463" viewBox="0 0 780 463"><path d="M94.2 437.2 L95.9 435.5 L97.6 437.2" fill="none" stroke="#444" stroke-width="0.9"/></svg>
<svg width="780" height="463" viewBox="0 0 780 463"><rect x="100.8" y="113.6" width="9.4" height="331.6" fill="#fafafa"/></svg>
<div class="b" style="left:103.5px;top:122.6px;width:2.8px;height:290.2px;background:#747474;border-radius:1px;"></div>
<svg width="780" height="463" viewBox="0 0 780 463"><path d="M111.4 237.6 L114.9 238.6 V256.8 L111.4 257.8 Z" fill="#fbfbfb" stroke="#d4d4d4" stroke-width="0.7"/><path d="M112.8 246.3 L111.5 247.6 L112.8 248.9 Z" fill="#8a8a8a"/></svg>
<svg width="780" height="463" viewBox="0 0 780 463">
<polygon points="390.0,339.0 537.8,379.2 499.3,417.5 351.4,376.8" fill="#d3ead3"/>
<polygon points="390.0,78.0 537.8,118.4 499.2,156.4 351.4,116.0" fill="#ffcdd0"/>
<polygon points="359.4,117.0 494.0,152.6 494.0,413.2 359.4,377.6" fill="#8d8e48"/>
<polygon points="494.0,152.6 529.6,118.2 529.6,378.8 494.0,413.2" fill="#b5b55c"/>
<polygon points="395.7,81.2 529.6,118.2 494.0,152.6 359.4,117.0" fill="#ffff8a"/>
<path d="M395.7 81.2 V341.8 L359.4 377.6 M395.7 341.8 L529.6 378.8" fill="none" stroke="#7fb4cf" stroke-width="0.7" opacity="0.9"/>
<path d="M529.6 118.2 V378.8" stroke="#a9cfe0" stroke-width="1" fill="none"/>
<polygon points="395.7,81.2 529.6,118.2 494.0,152.6 359.4,117.0" fill="none" stroke="#6cb2d6" stroke-width="1.4" stroke-linejoin="round"/>
<path d="M359.4 117 V377.6 L494 413.20000000000005 L529.6 378.8" fill="none" stroke="#6cb2d6" stroke-width="1.2" stroke-linejoin="round"/>
<path d="M494 152.6 V413.20000000000005" stroke="#6cb2d6" stroke-width="2" fill="none"/>
<polygon points="390.0,339.0 537.8,379.2 499.3,417.5 351.4,376.8" fill="none" stroke="#2c9330" stroke-width="1.15"/>
<path d="M370.7 357.9 L518.5 398.4 M463.9 359.1 L425.4 397.1" stroke="#2c9330" stroke-width="1.15" fill="none"/>
<polygon points="395.7,81.2 529.6,118.2 494.0,152.6 359.4,117.0" fill="#ffff8a"/>
<polygon points="395.7,81.2 529.6,118.2 494.0,152.6 359.4,117.0" fill="none" stroke="#6cb2d6" stroke-width="1.3" stroke-linejoin="round"/>
<path d="M395.7 81.2 V127.2" stroke="#8cc0dc" stroke-width="0.8" fill="none"/>
<polygon points="390.0,78.0 537.8,118.4 499.2,156.4 351.4,116.0" fill="none" stroke="#f4342c" stroke-width="1.1"/>
<path d="M370.7 97.0 L518.5 137.4 M463.9 98.2 L425.3 136.2" stroke="#f4342c" stroke-width="1.1" fill="none"/>
<path d="M444.6 118 V379" stroke="#1414f0" stroke-width="1.5" stroke-dasharray="1.7 1.5" fill="none"/>
<ellipse cx="445.2" cy="247.3" rx="38.6" ry="19.4" transform="rotate(1.5 445.2 247.3)" fill="#ffffff" fill-opacity="0.40"/>
<polygon points="444.7,247.3 402.4,236.7 402.4,235.1 402.5,233.4 402.7,231.8 402.9,230.3 403.2,228.7 403.6,227.2 404.0,225.7 404.5,224.2 405.0,222.8 405.6,221.4 406.3,220.1 407.0,218.8 407.8,217.5 408.6,216.3 409.5,215.2 410.5,214.0 411.5,213.0 412.5,212.0 413.6,211.0 414.8,210.1 416.0,209.3 417.2,208.5 418.5,207.8 419.8,207.1 421.2,206.5 422.6,206.0 424.0,205.5 425.5,205.1 427.0,204.7 428.5,204.4 430.1,204.2 431.6,204.1 433.2,204.0 434.8,204.0 436.4,204.0 438.1,204.2 439.7,204.3 441.4,204.6 443.0,204.9 444.7,205.3" fill="#ffffff" fill-opacity="0.26"/>
<polygon points="444.7,247.3 418.7,272.3 418.7,270.6 418.8,268.9 418.9,267.2 419.0,265.4 419.2,263.6 419.4,261.8 419.7,260.0 420.0,258.1 420.3,256.2 420.7,254.3 421.1,252.4 421.5,250.5 422.0,248.6 422.5,246.7 423.1,244.8 423.7,242.8 424.3,240.9 424.9,239.0 425.6,237.1 426.3,235.3 427.1,233.4 427.8,231.6 428.6,229.8 429.4,228.0 430.3,226.3 431.1,224.6 432.0,222.9 432.9,221.2 433.8,219.6 434.8,218.1 435.7,216.5 436.7,215.1 437.6,213.7 438.6,212.3 439.6,211.0 440.6,209.7 441.6,208.5 442.7,207.4 443.7,206.3 444.7,205.3" fill="#ffffff" fill-opacity="0.34"/>
<path d="M370.2 227.3 L518 267.4" stroke="#f01010" stroke-width="1.1" stroke-dasharray="3.2 1.2 1 1.2" fill="none" opacity="0.75"/>
<path d="M444.6 226 V268" stroke="#1414f0" stroke-width="1.5" stroke-dasharray="1.7 1.5" fill="none" opacity="0.45"/>
<path d="M395 247.1 A49.8 25.7 0 1 0 494.6 247.1 A49.8 25.7 0 1 0 395 247.1 Z M402 247.1 A42.8 20.7 0 1 1 487.6 247.1 A42.8 20.7 0 1 1 402 247.1 Z" transform="rotate(1.5 444.8 247.1)" fill="#f3a12c" fill-opacity="0.93" fill-rule="evenodd"/>
<polyline points="403.3,245.7 403.0,243.8 402.7,241.9 402.5,240.0 402.4,238.2 402.4,236.3 402.5,234.5 402.6,232.7 402.8,231.0 403.1,229.2 403.5,227.5 403.9,225.9 404.5,224.2 405.1,222.7 405.8,221.1 406.5,219.7 407.4,218.2 408.3,216.9 409.2,215.5 410.3,214.3 411.4,213.1 412.5,212.0 413.8,210.9 415.1,209.9 416.4,209.0 417.8,208.1 419.2,207.4 420.7,206.7 422.3,206.1 423.9,205.5 425.5,205.1 427.2,204.7 428.9,204.4 430.6,204.2 432.3,204.0 434.1,204.0 435.9,204.0 437.7,204.1 439.5,204.3 441.4,204.6 443.2,205.0" fill="none" stroke="#f3a12c" stroke-width="5" stroke-opacity="0.93"/>
<polyline points="419.0,277.9 418.8,276.3 418.7,274.7 418.7,273.1 418.7,271.4 418.7,269.7 418.8,267.9 419.0,266.1 419.1,264.3 419.3,262.5 419.6,260.6 419.9,258.7 420.2,256.8 420.6,254.8 421.0,252.9 421.4,250.9 421.9,249.0 422.4,247.0 423.0,245.1 423.6,243.1 424.2,241.1 424.9,239.2 425.6,237.3 426.3,235.4 427.0,233.5 427.8,231.6 428.6,229.8 429.5,227.9 430.3,226.2 431.2,224.4 432.1,222.7 433.0,221.0 434.0,219.4 434.9,217.8 435.9,216.3 436.9,214.8 437.9,213.3 438.9,211.9 439.9,210.6 440.9,209.3 442.0,208.1" fill="none" stroke="#f3a12c" stroke-width="1.8" stroke-opacity="0.9"/>
<path d="M370.2 227.3 L398 234.9 M494 260.9 L518 267.4" stroke="#f01010" stroke-width="1.1" stroke-dasharray="3.2 1.2 1 1.2" fill="none"/>
<ellipse cx="447.6" cy="247.8" rx="4.6" ry="3.3" fill="#74742c" fill-opacity="0.85"/>
<path d="M443.2 247 V205.6 H438.6 L444.7 193.8 L451 205.6 H446.4 V247 Z" fill="#f3a12c" stroke="#c97a10" stroke-width="0.4"/>
<path d="M444.4 247 L404.2 237.8 L403.4 241.6 L399.4 240.8 L401.6 230.2 L405.6 231 L405 233.4 L445 243.4 Z" fill="#f3a12c" stroke="#c97a10" stroke-width="0.4"/>
<text x="411.4" y="279.4" font-family="Liberation Sans, sans-serif" font-size="7" fill="#111">Y</text>
<path d="M443 245.6 L420.4 267.8 L417.4 265.8 L414.8 276.8 L426.7 273.2 L423.6 271.2 L446.4 249 Z" fill="#f3a12c" stroke="#c97a10" stroke-width="0.4"/>
<circle cx="444.7" cy="247.3" r="2.9" fill="#ffffff" stroke="#aaa" stroke-width="0.4"/>
<circle cx="370.3" cy="227.3" r="1.1" fill="#fff" stroke="#777" stroke-width="0.4"/>
<path d="M444.6 108.4 L446.6 111.4 L445.6 111.8 V116.6 H443.6 V111.8 L442.6 111.4 Z" fill="#b9b9b9" stroke="#888" stroke-width="0.4"/>
<path d="M442.4 379.6 H446.6 V382 L445.6 384.2 H443.2 L442.4 382 Z" fill="#c9c9c9" stroke="#999" stroke-width="0.4"/>
<path d="M445.4 378.4 L462 383.8" stroke="#555" stroke-width="0.7"/><path d="M445.4 378.4 L462 383.8" stroke="#eee" stroke-width="0.5" stroke-dasharray="1.2 1.2"/><circle cx="462.4" cy="384.2" r="1" fill="#fff" stroke="#666" stroke-width="0.4"/>
<rect x="369.8" y="233.6" width="29.6" height="12.8" fill="#d0d4e1" stroke="#777c94" stroke-width="0.6"/>
<rect x="444.6" y="123.4" width="35" height="12.2" fill="#d0d4e1" stroke="#777c94" stroke-width="0.6"/>
<circle cx="444.8" cy="129.4" r="0.9" fill="#e8e8e8" stroke="#555" stroke-width="0.4"/>
<rect x="444.6" y="384.4" width="35" height="12.8" fill="#d0d4e1" stroke="#777c94" stroke-width="0.6"/>
<text x="384.6" y="241.8" text-anchor="middle" font-family="Liberation Sans, sans-serif" font-size="4.9" fill="#222">Bend Axis</text>
<text x="462.8" y="131.2" text-anchor="middle" font-family="Liberation Sans, sans-serif" font-size="5.1" fill="#222">Trim Plane 2</text>
<text x="462.8" y="392.8" text-anchor="middle" font-family="Liberation Sans, sans-serif" font-size="5.1" fill="#222">Trim Plane 1</text>
<text x="444.5" y="187.9" font-family="Liberation Sans, sans-serif" font-size="8" fill="#111" textLength="4.7" lengthAdjust="spacingAndGlyphs">Z</text>
<text x="382.3" y="230" font-family="Liberation Sans, sans-serif" font-size="6.8" fill="#111">X</text>
<path d="M113.6 65.8 L115.6 67.4 L113.6 69 Z" fill="#333"/>
<path d="M119 66.4 L122 64.6 L126.4 66.4 V69.4 L123 71.2 L119 69.4 Z" fill="#eec33c" stroke="#8a6a14" stroke-width="0.5"/><path d="M122.4 67.4 L126.4 66 V69.4 L122.8 71 Z" fill="#3f7fc4" stroke="#1f4f86" stroke-width="0.4"/>
<path d="M736.4 68.6 L739.8 71.8 L746.4 65.2" fill="none" stroke="#c0e4bb" stroke-width="3"/>
<path d="M755.4 77 L762.8 84.6 M762.8 77 L755.4 84.6" stroke="#f6cdc9" stroke-width="3"/>
<rect x="767.2" y="73.2" width="12.8" height="84.4" fill="#d9d9d9" stroke="#b5b5b5" stroke-width="0.6"/>
<rect x="767.5" y="73.5" width="12.5" height="11.4" fill="#ffffff"/>
<path d="M767.2 85.2 H780" stroke="#b9b9b9" stroke-width="0.5"/>
<path d="M767.2 97.3 H780" stroke="#b9b9b9" stroke-width="0.5"/>
<path d="M767.2 109.4 H780" stroke="#b9b9b9" stroke-width="0.5"/>
<path d="M767.2 121.4 H780" stroke="#b9b9b9" stroke-width="0.5"/>
<path d="M767.2 133.4 H780" stroke="#b9b9b9" stroke-width="0.5"/>
<path d="M767.2 145.5 H780" stroke="#b9b9b9" stroke-width="0.5"/>
<path d="M769.8 79.8 L774.4 75.2 L779 79.8 L778 80.4 L774.4 77.2 L770.8 80.4 Z" fill="#1f5a8a" stroke="#1f5a8a" stroke-width="0.7"/><path d="M771.6 80 V83 H777.2 V80" fill="#fff" stroke="#2a4a66" stroke-width="0.7"/><rect x="773.4" y="80.6" width="2" height="1.8" fill="#4a6a86"/>
<path d="M772 88.4 L774.6 87.2 L777.2 88.4 V93.8 L774.6 95 L772 93.8 Z M774.6 89.4 V95" fill="#eee" stroke="#555" stroke-width="0.6"/>
<path d="M770.2 106.6 V100.6 H773 L773.8 101.6 H777 V103 H772 L770.2 106.6 H776.4 L778.4 103 H772" fill="#f4f4f4" stroke="#555" stroke-width="0.6"/>
<rect x="771" y="112.2" width="7" height="6.6" fill="#e3ae2c" stroke="#555" stroke-width="0.5"/><path d="M772 113.4 L777 117.6 M777 113.4 L772 117.6" stroke="#555" stroke-width="0.6"/><circle cx="774.5" cy="115.5" r="1.2" fill="#f4f4f4" stroke="#555" stroke-width="0.4"/>
<circle cx="774.5" cy="127.6" r="3.4" fill="#e53b2c"/><path d="M774.5 127.6 L774.5 124.2 A3.4 3.4 0 0 1 777.9 127.6 Z" fill="#2a62c4"/><path d="M774.5 127.6 L771.1 127.6 A3.4 3.4 0 0 0 774.5 131 Z" fill="#3fae49"/><path d="M774.5 127.6 L774.5 131 A3.4 3.4 0 0 0 777.9 127.6 Z" fill="#f5c928"/>
<rect x="771" y="136" width="7.2" height="7" fill="#e8f0f8" stroke="#2b5f94" stroke-width="0.7"/><rect x="771" y="136" width="7.2" height="1.8" fill="#3b77b5"/><path d="M771 139.6 H778.2 M771 141.4 H778.2 M773.4 137.8 V143" stroke="#7fa3c9" stroke-width="0.4"/>
<rect x="771" y="148.2" width="6.4" height="6" fill="#dfe8f2" stroke="#2b5f94" stroke-width="0.7"/><rect x="771" y="148.2" width="6.4" height="1.6" fill="#3b77b5"/><circle cx="777" cy="153.8" r="1.8" fill="#e3ae2c" stroke="#7a5c12" stroke-width="0.4"/>
</svg>
<span class="t" style="top:64.19px;font-size:6.15px;line-height:7.38px;color:#222;left:129px;">Part1 (Default) &lt;&lt;D..</span>
<span class="t" style="top:438.63px;font-size:6.4px;line-height:7.68px;color:#111;font-weight:bold;left:115.3px;">*Trimetric</span>
<svg width="780" height="463" viewBox="0 0 780 463"><rect x="0.6" y="446" width="33.2" height="8.3" fill="#a4a9c0"/></svg>
<div class="b" style="left:1.0px;top:446.4px;width:7.8px;height:7.5px;background:#adb2c8;border:0.5px solid #989db6;"></div>
<div class="b" style="left:9.2px;top:446.4px;width:7.8px;height:7.5px;background:#adb2c8;border:0.5px solid #989db6;"></div>
<div class="b" style="left:17.4px;top:446.4px;width:7.8px;height:7.5px;background:#adb2c8;border:0.5px solid #989db6;"></div>
<div class="b" style="left:25.599999999999998px;top:446.4px;width:7.8px;height:7.5px;background:#adb2c8;border:0.5px solid #989db6;"></div>
<svg width="780" height="463" viewBox="0 0 780 463">
<path d="M6.300000000000001 448.7 L4.300000000000001 450.3 L6.300000000000001 451.90000000000003 Z" fill="#d3d6e3"/><path d="M3.5000000000000004 448.7 V451.90000000000003" stroke="#d3d6e3" stroke-width="0.7"/>
<path d="M14.1 448.7 L12.1 450.3 L14.1 451.90000000000003 Z" fill="#d3d6e3"/>
<path d="M20.299999999999997 448.7 L22.299999999999997 450.3 L20.299999999999997 451.90000000000003 Z" fill="#d3d6e3"/>
<path d="M28.1 448.7 L30.1 450.3 L28.1 451.90000000000003 Z" fill="#d3d6e3"/><path d="M30.9 448.7 V451.90000000000003" stroke="#d3d6e3" stroke-width="0.7"/>
</svg>
<svg width="780" height="463" viewBox="0 0 780 463"><rect x="34" y="446" width="30.2" height="8.4" fill="#fafafa"/></svg>
<div class="b" style="left:64.2px;top:446.1px;width:36px;height:8.2px;background:#d6d6d6;border:0.5px solid #c2c2c2;"></div>
<div class="b" style="left:100.2px;top:446.1px;width:58.2px;height:8.2px;background:#d6d6d6;border:0.5px solid #c2c2c2;"></div>
<div class="b" style="left:158.4px;top:446.1px;width:620.6px;height:8.2px;background:#f4f4f4;border:0.5px solid #c6c6c6;"></div>
<span class="t" style="top:447.27px;font-size:6.5px;line-height:7.8px;color:#111;font-weight:bold;left:-50.4px;width:200px;text-align:center;">Model</span>
<span class="t" style="top:447.46px;font-size:6.2px;line-height:7.44px;color:#2a2a2a;left:-17.5px;width:200px;text-align:center;">3D Views</span>
<span class="t" style="top:447.33px;font-size:6.4px;line-height:7.68px;color:#2a2a2a;left:27.400000000000006px;width:200px;text-align:center;">Motion Study 1</span>
<span class="t" style="top:457.05px;font-size:5.4px;line-height:6.48px;color:#333;left:1.2px;">Part1</span>
<span class="t" style="top:456.74px;font-size:5.9px;line-height:7.08px;color:#222;left:564.8px;width:200px;text-align:center;">Editing Part</span>
<span class="t" style="top:456.99px;font-size:5.5px;line-height:6.6px;color:#b4b4b4;left:640px;width:200px;text-align:center;">MMGS</span>
<svg width="780" height="463" viewBox="0 0 780 463"><path d="M759.6 459 l1 1 l1 -1 Z" fill="#999"/><circle cx="774.4" cy="459.2" r="1.9" fill="none" stroke="#555" stroke-width="0.7"/><path d="M772.6 457.4 h2 v1.6" fill="none" stroke="#555" stroke-width="0.6"/></svg>
</div></body></html>
